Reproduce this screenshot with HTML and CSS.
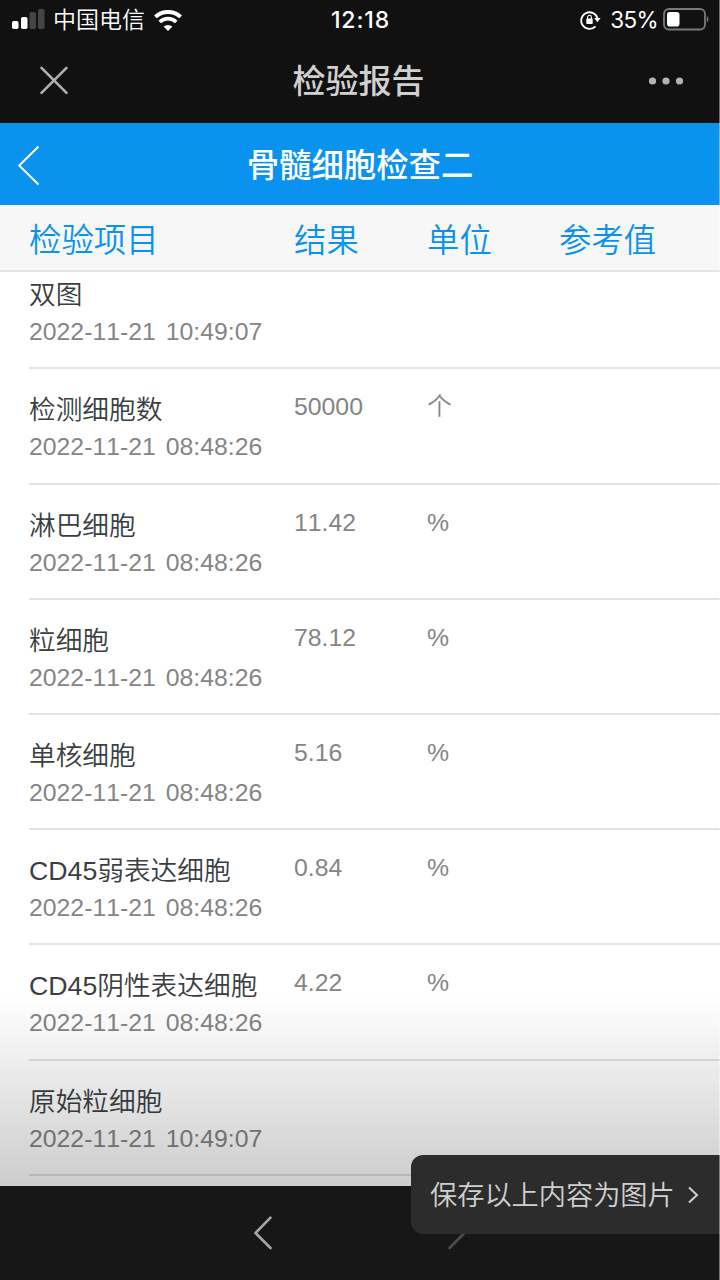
FILE: index.html
```html
<!DOCTYPE html>
<html lang="zh-CN">
<head>
    <meta charset="UTF-8">
    <meta name="viewport" content="width=device-width, initial-scale=1.0">
    <title>检验报告</title>
    <link rel="stylesheet" href="styles.css">
</head>
<body>
    <div class="screen">
        <!-- Phone status bar -->
        <div class="status-bar">
            <div class="status-left">
                <svg class="signal" width="34" height="22" viewBox="0 0 34 22">
                    <rect x="0" y="12" width="6.5" height="8" rx="1.8" fill="#fff"/>
                    <rect x="9" y="8" width="6.5" height="12" rx="1.8" fill="#fff"/>
                    <rect x="17.5" y="3" width="6.5" height="17" rx="1.8" fill="#454545"/>
                    <rect x="26" y="0" width="6.5" height="20" rx="1.8" fill="#454545"/>
                </svg>
                <span class="carrier">中国电信</span>
                <svg class="wifi" width="28" height="21" viewBox="0 0 28 21">
                    <path d="M1.4 6.9 A18.5 18.5 0 0 1 26.6 6.9" fill="none" stroke="#fff" stroke-width="4"/>
                    <path d="M5.8 12 A11.6 11.6 0 0 1 22.2 12" fill="none" stroke="#fff" stroke-width="3.8"/>
                    <path d="M14 21 L9.6 16.6 A6.6 6.6 0 0 1 18.4 16.6 Z" fill="#fff"/>
                </svg>
            </div>
            <div class="clock">12:18</div>
            <div class="status-right">
                <svg class="lock" width="21" height="20" viewBox="0 0 21 20">
                    <path d="M15.5 16.3 A8.3 8.3 0 1 1 17.4 8" fill="none" stroke="#fff" stroke-width="1.8"/>
                    <path d="M14.2 8 H20.6 L17.4 12.2 Z" fill="#fff"/>
                    <rect x="6.3" y="8.6" width="6.4" height="5.4" rx="0.8" fill="#fff"/>
                    <path d="M7.6 9 V7.2 a1.9 1.9 0 0 1 3.8 0 V9" fill="none" stroke="#fff" stroke-width="1.1"/>
                </svg>
                <span class="percent">35%</span>
                <svg class="battery" width="47" height="23" viewBox="0 0 47 23">
                    <rect x="2" y="1" width="41" height="20.5" rx="5" fill="none" stroke="#7a7a7a" stroke-width="1.8"/>
                    <rect x="5" y="4" width="12.5" height="14.5" rx="2.8" fill="#fff"/>
                    <path d="M44.8 7.8 q3.4 3.4 0 7 Z" fill="#7a7a7a"/>
                </svg>
            </div>
        </div>

        <!-- App title -->
        <div class="app-bar">
            <svg class="close" width="30" height="30" viewBox="0 0 30 30">
                <path d="M2.5 1.8 L27.5 26.8 M27.5 1.8 L2.5 26.8" stroke="#b0b0b0" stroke-width="2.6" stroke-linecap="round"/>
            </svg>
            <h1 class="app-title">检验报告</h1>
            <svg class="more" width="36" height="8" viewBox="0 0 36 8">
                <circle cx="4.5" cy="4" r="3.6" fill="#b3b3b3"/>
                <circle cx="18" cy="4" r="3.6" fill="#b3b3b3"/>
                <circle cx="31.5" cy="4" r="3.6" fill="#b3b3b3"/>
            </svg>
        </div>

        <!-- Report header -->
        <div class="report-bar">
            <svg class="back" width="24" height="42" viewBox="0 0 24 42">
                <path d="M21.5 1.5 L2.2 20.5 L21.5 39.5" fill="none" stroke="#fff" stroke-width="2"/>
            </svg>
            <h2 class="report-title">骨髓细胞检查二</h2>
        </div>

        <div class="columns table-head">
            <span>检验项目</span>
            <span>结果</span>
            <span>单位</span>
            <span>参考值</span>
        </div>

        <div class="results">
            <div class="columns row">
                <div class="item"><p class="name">双图</p><p class="time">2022-11-21 10:49:07</p></div>
            </div>
            <div class="columns row">
                <div class="item"><p class="name">检测细胞数</p><p class="time">2022-11-21 08:48:26</p></div>
                <span class="value">50000</span>
                <span class="value">个</span>
            </div>
            <div class="columns row">
                <div class="item"><p class="name">淋巴细胞</p><p class="time">2022-11-21 08:48:26</p></div>
                <span class="value">11.42</span>
                <span class="value">%</span>
            </div>
            <div class="columns row">
                <div class="item"><p class="name">粒细胞</p><p class="time">2022-11-21 08:48:26</p></div>
                <span class="value">78.12</span>
                <span class="value">%</span>
            </div>
            <div class="columns row">
                <div class="item"><p class="name">单核细胞</p><p class="time">2022-11-21 08:48:26</p></div>
                <span class="value">5.16</span>
                <span class="value">%</span>
            </div>
            <div class="columns row">
                <div class="item"><p class="name">CD45弱表达细胞</p><p class="time">2022-11-21 08:48:26</p></div>
                <span class="value">0.84</span>
                <span class="value">%</span>
            </div>
            <div class="columns row">
                <div class="item"><p class="name">CD45阴性表达细胞</p><p class="time">2022-11-21 08:48:26</p></div>
                <span class="value">4.22</span>
                <span class="value">%</span>
            </div>
            <div class="columns row">
                <div class="item"><p class="name">原始粒细胞</p><p class="time">2022-11-21 10:49:07</p></div>
            </div>
            <div class="shade"></div>
        </div>

        <!-- Browser navigation -->
        <div class="nav-bar">
            <svg width="20" height="34" viewBox="0 0 20 34">
                <path d="M17.5 1.7 L2.5 17 L17.5 32" fill="none" stroke="#a6a6a6" stroke-width="2.6" stroke-linecap="round" stroke-linejoin="round"/>
            </svg>
            <svg width="20" height="34" viewBox="0 0 20 34">
                <path d="M2.5 1.7 L17.5 17 L2.5 32" fill="none" stroke="#4d4d4d" stroke-width="2.6" stroke-linecap="round" stroke-linejoin="round"/>
            </svg>
        </div>

        <div class="save-tip">
            <span>保存以上内容为图片</span>
            <svg width="12" height="18" viewBox="0 0 12 18">
                <path d="M1 1.5 L9 9 L1 16.5" fill="none" stroke="#d0d0d0" stroke-width="2"/>
            </svg>
        </div>
    </div>
</body>
</html>
```
FILE: styles.css
```css
* {
    box-sizing: border-box;
}

body {
    margin: 0;
    background: #fff;
    font-family: "Liberation Sans", "Noto Sans CJK SC", sans-serif;
    font-kerning: none;
}

h1, h2, p {
    margin: 0;
}

svg {
    display: block;
    flex: none;
}

.screen {
    position: relative;
    display: flex;
    flex-direction: column;
    width: 720px;
    height: 1280px;
    overflow: hidden;
}

/* Thin light edge on the right side */
.screen::after {
    content: "";
    position: absolute;
    inset: 0 0 0 auto;
    width: 1px;
    background: rgba(255, 255, 255, 0.4);
}

/* Status bar */
.status-bar {
    display: grid;
    grid-template-columns: 1fr auto 1fr;
    align-items: center;
    height: 40px;
    padding: 0 11px 0 12px;
    background: #111;
    color: #fff;
}

.status-left,
.status-right {
    display: flex;
    align-items: center;
}

.status-right {
    justify-content: flex-end;
}

.status-right .battery {
    margin-top: -1px;
}

.carrier {
    margin: 0 9px 0 7px;
    font-size: 23px;
    font-weight: 350;
    line-height: 40px;
}

.clock {
    font-family: Inter, sans-serif;
    font-size: 23px;
    font-weight: 500;
    letter-spacing: 0.9px;
}

.percent {
    margin: -1px 4px 0 11px;
    font-family: Inter, sans-serif;
    font-size: 22.5px;
    letter-spacing: -0.6px;
}

.status-right .lock {
    margin-right: -1px;
    transform: translateX(1px);
}

/* App bar */
.app-bar {
    display: flex;
    align-items: center;
    justify-content: space-between;
    height: 83px;
    padding: 0 36px 2px 39px;
    background: #111;
}

.app-title {
    padding-top: 3px;
    color: #d0d0d0;
    font-size: 33px;
    font-weight: 500;
    line-height: 48px;
}

/* Blue bar */
.report-bar {
    display: grid;
    grid-template-columns: 24px 1fr 24px;
    align-items: center;
    height: 82px;
    padding: 3px 17px 0;
    background: #0a93ee;
}

.report-title {
    color: #fff;
    font-size: 32.4px;
    font-weight: 500;
    line-height: 48px;
    text-align: center;
}

/* Result table */
.columns {
    display: grid;
    grid-template-columns: 265px 133px 132px 1fr;
}

.table-head {
    align-items: center;
    height: 67px;
    padding: 0 29px;
    border-bottom: 2px solid #e4e4e4;
    background: #f7f7f7;
    color: #0a93ee;
    font-size: 32.4px;
    font-weight: 350;
}

.results {
    position: relative;
    height: 914px;
    padding-left: 29px;
    overflow: hidden;
}

.row {
    height: 115.2px;
    padding-top: 22.1px;
    border-bottom: 2px solid #e2e2e2;
}

.row:first-child {
    height: 97.4px;
    padding-top: 4.4px;
}

.name {
    color: #3b3f44;
    font-size: 26.7px;
    font-weight: 350;
    line-height: 38px;
    white-space: nowrap;
}

.time,
.value {
    color: #858585;
    font-size: 24.8px;
    line-height: 36px;
    font-weight: 350;
}

.time {
    word-spacing: 3px;
}

.value {
    line-height: 31px;
}

.shade {
    position: absolute;
    inset: auto 0 0 0;
    height: 190px;
    background: linear-gradient(rgba(0, 0, 0, 0), rgba(0, 0, 0, 0.2));
}

/* Bottom bar */
.nav-bar {
    display: flex;
    align-items: center;
    justify-content: center;
    gap: 174px;
    height: 94px;
    background: #171717;
}

.save-tip {
    position: absolute;
    right: 0;
    top: 1155px;
    display: flex;
    align-items: center;
    justify-content: space-between;
    width: 309px;
    height: 79px;
    padding: 0 20px 0 19px;
    border-radius: 12px 0 0 12px;
    background: #2c2c2c;
    color: #d0d0d0;
    font-size: 27.2px;
    font-weight: 350;
    white-space: nowrap;
}

.save-tip span {
    padding-bottom: 3px;
}
```
